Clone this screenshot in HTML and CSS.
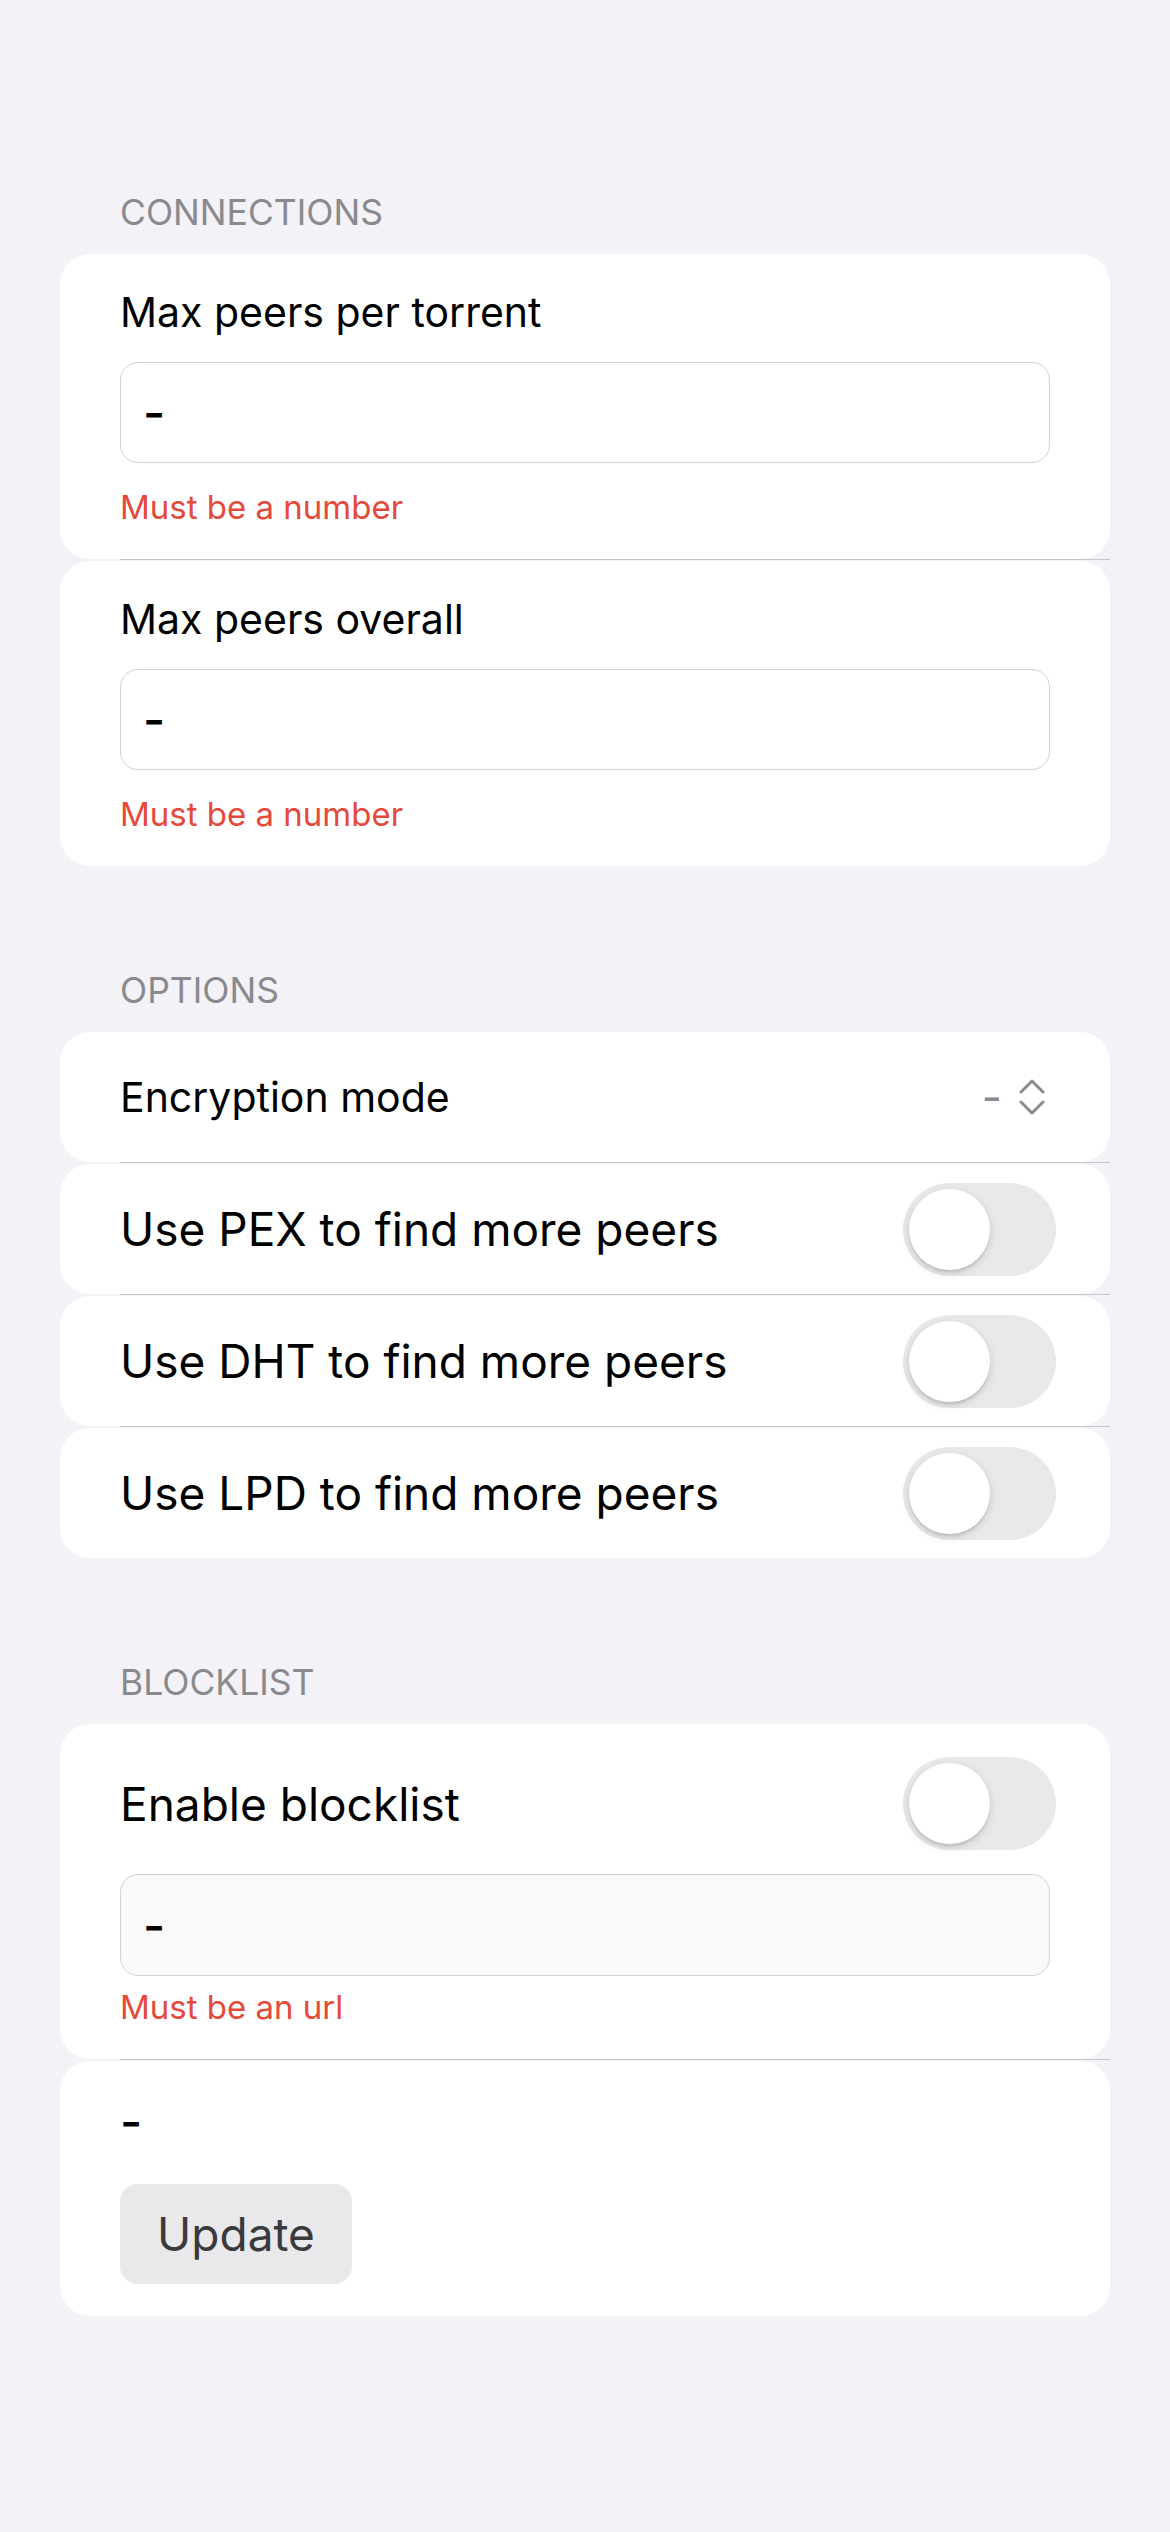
FILE: index.html
```html
<!DOCTYPE html>
<html lang="en">
<head>
<meta charset="utf-8">
<title>Settings</title>
<link rel="stylesheet" href="styles.css">
</head>
<body>
<main class="page">
  <section class="group">
    <h2 class="group-title">CONNECTIONS</h2>
    <div class="card">
      <div class="row field">
        <div class="label">Max peers per torrent</div>
        <div class="input"><span class="dash">-</span></div>
        <div class="error">Must be a number</div>
      </div>
      <div class="sep"></div>
      <div class="row field">
        <div class="label">Max peers overall</div>
        <div class="input"><span class="dash">-</span></div>
        <div class="error">Must be a number</div>
      </div>
    </div>
  </section>

  <section class="group">
    <h2 class="group-title">OPTIONS</h2>
    <div class="card">
      <div class="row line-row">
        <div class="label">Encryption mode</div>
        <div class="select-value">
          <span>-</span>
          <svg class="chevrons" width="26" height="36" viewBox="0 0 26 36" aria-hidden="true">
            <polyline points="2,13 13,2 24,13" fill="none" stroke="#8a8a8e" stroke-width="3" stroke-linecap="round" stroke-linejoin="round"/>
            <polyline points="2,23 13,34 24,23" fill="none" stroke="#8a8a8e" stroke-width="3" stroke-linecap="round" stroke-linejoin="round"/>
          </svg>
        </div>
      </div>
      <div class="sep"></div>
      <div class="row line-row">
        <div class="text">Use PEX to find more peers</div>
        <div class="toggle"></div>
      </div>
      <div class="sep"></div>
      <div class="row line-row">
        <div class="text">Use DHT to find more peers</div>
        <div class="toggle"></div>
      </div>
      <div class="sep"></div>
      <div class="row line-row">
        <div class="text">Use LPD to find more peers</div>
        <div class="toggle"></div>
      </div>
    </div>
  </section>

  <section class="group">
    <h2 class="group-title">BLOCKLIST</h2>
    <div class="card">
      <div class="row block-row">
        <div class="block-head">
          <div class="text">Enable blocklist</div>
          <div class="toggle"></div>
        </div>
        <div class="input disabled"><span class="dash">-</span></div>
        <div class="error">Must be an url</div>
      </div>
      <div class="sep"></div>
      <div class="row update-row">
        <div class="date"><span class="dash">-</span></div>
        <button class="btn" type="button">Update</button>
      </div>
    </div>
  </section>
</main>
</body>
</html>
```

FILE: styles.css
```css
html, body {
  margin: 0;
  padding: 0;
  background: #f2f2f7;
}

body {
  font-family: "Inter", "Noto Sans", sans-serif;
  color: #000;
}

.page {
  box-sizing: border-box;
  min-height: 2532px;
  padding: 191px 60px 0;
}

.group + .group {
  margin-top: 103px;
}

.group-title {
  margin: 0 0 19px;
  padding-left: 60px;
  font-size: 35.5px;
  line-height: 44px;
  font-weight: 400;
  color: #8a8a8e;
}

.card {
  display: flex;
  flex-direction: column;
}

.row {
  background: #fff;
  border-radius: 30px;
  padding: 0 60px;
}

.sep {
  height: 1px;
  margin: 0 0 1px 60px;
  background: #c6c6c8;
}

.label {
  font-size: 41px;
  line-height: 50px;
}

.text {
  font-size: 46px;
  line-height: 54px;
}

.dash {
  font-size: 48px;
  font-weight: 500;
}

.field {
  padding: 33px 60px 32px;
}

.input {
  box-sizing: border-box;
  display: flex;
  align-items: center;
  margin-top: 25px;
  height: 101px;
  padding-left: 22px;
  border: 1px solid #d1d1d6;
  border-radius: 18px;
  background: #fff;
  font-size: 41px;
}

.input.disabled {
  background: #f9f9f9;
}

.error {
  margin-top: 24px;
  font-size: 33px;
  line-height: 40px;
  color: #e5493a;
}

.line-row {
  height: 130px;
  display: flex;
  align-items: center;
  justify-content: space-between;
}

.select-value {
  display: flex;
  align-items: center;
  gap: 17px;
  margin-right: 5px;
  color: #8a8a8e;
  font-size: 44px;
}

.chevrons {
  display: block;
}

.toggle {
  position: relative;
  flex: none;
  width: 153px;
  height: 93px;
  margin-right: -6px;
  border-radius: 47px;
  background: #e9e9eb;
}

.toggle::after {
  content: "";
  position: absolute;
  left: 6px;
  top: 6px;
  width: 81px;
  height: 81px;
  border-radius: 50%;
  background: #fff;
  box-shadow: 0 3px 8px rgba(0, 0, 0, 0.15), 0 3px 1px rgba(0, 0, 0, 0.06);
}

.block-row {
  padding: 33px 60px 32px;
}

.block-head {
  display: flex;
  align-items: center;
  justify-content: space-between;
  height: 93px;
}

.block-row .input {
  margin-top: 24px;
  height: 102px;
}

.block-row .error {
  margin-top: 11px;
}

.update-row {
  padding: 34px 60px 32px;
}

.date {
  font-size: 41px;
  line-height: 54px;
}

.btn {
  display: flex;
  align-items: center;
  justify-content: center;
  margin-top: 33px;
  width: 232px;
  height: 100px;
  padding: 0;
  border: none;
  border-radius: 18px;
  background: #e9e9eb;
  color: #3a3a3c;
  font-family: inherit;
  font-size: 46px;
}
```
